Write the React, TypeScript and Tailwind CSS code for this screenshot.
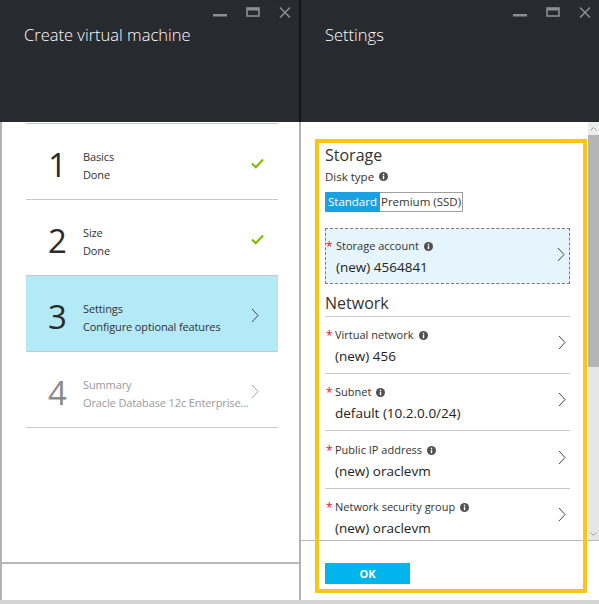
import type { ReactNode } from 'react';

const font = { fontFamily: '"Open Sans", "Noto Sans", "Liberation Sans", sans-serif' };

function WindowControls() {
  return (
    <div className="flex items-start gap-[19px] mt-[7px] mr-[8px]">
      <svg width="14" height="11" viewBox="0 0 14 11">
        <rect x="0" y="7" width="14" height="2.5" fill="#8b8e93" />
      </svg>
      <svg width="14" height="10" viewBox="0 0 14 10">
        <rect x="1" y="1" width="12" height="8" fill="none" stroke="#8b8e93" strokeWidth="1.6" />
        <rect x="1" y="1" width="12" height="2.5" fill="#8b8e93" />
      </svg>
      <svg width="12" height="11" viewBox="0 0 12 11">
        <path d="M1 0.5 L11 10.5 M11 0.5 L1 10.5" stroke="#8b8e93" strokeWidth="1.5" />
      </svg>
    </div>
  );
}

function BladeHeader({ title }: { title: string }) {
  return (
    <div className="h-[122px] bg-[#272a2f] flex items-start justify-between shrink-0">
      <div className="ml-[24px] mt-[23px] text-[16.5px] font-light text-white leading-[24px]">{title}</div>
      <WindowControls />
    </div>
  );
}

function Chevron({ color = '#444' }: { color?: string }) {
  return (
    <svg width="8" height="15" viewBox="0 0 8 15">
      <path d="M1 1 L7 7.5 L1 14" fill="none" stroke={color} strokeWidth="1" />
    </svg>
  );
}

function Check() {
  return (
    <svg width="13" height="11" viewBox="0 0 13 11">
      <path d="M1 5.5 L4.8 9.3 L12 1.5" fill="none" stroke="#7fba00" strokeWidth="2" />
    </svg>
  );
}

function Info() {
  return (
    <svg width="9" height="9" viewBox="0 0 9 9" className="inline-block ml-[5px] -mt-[2px] align-middle">
      <circle cx="4.5" cy="4.5" r="4.5" fill="#505050" />
      <rect x="3.8" y="3.6" width="1.4" height="3.6" fill="#fff" />
      <rect x="3.8" y="1.7" width="1.4" height="1.3" fill="#fff" />
    </svg>
  );
}

type Step = { n: string; title: string; sub: string; state: 'done' | 'active' | 'todo' };

const steps: Step[] = [
  { n: '1', title: 'Basics', sub: 'Done', state: 'done' },
  { n: '2', title: 'Size', sub: 'Done', state: 'done' },
  { n: '3', title: 'Settings', sub: 'Configure optional features', state: 'active' },
  { n: '4', title: 'Summary', sub: 'Oracle Database 12c Enterprise...', state: 'todo' },
];

function StepRow({ step }: { step: Step }) {
  const muted = step.state === 'todo';
  return (
    <div
      className={`h-[76px] flex items-center border-b border-[#c8c8c8] pt-[8px] ${
        step.state === 'active' ? 'bg-[#b4e9f8] border-[#b4e9f8]' : ''
      }`}
    >
      <div
        className={`w-[57px] shrink-0 pl-[22px] text-[33px] font-medium leading-none -mt-[2px] ${
          muted ? 'text-[#8a8a8a]' : 'text-[#2b2b2b]'
        }`}
      >
        {step.n}
      </div>
      <div
        className={`flex-1 min-w-0 whitespace-nowrap text-[11px] leading-[18px] tracking-[-0.12px] ${
          muted ? 'text-[#9a9a9a]' : 'text-[#333]'
        }`}
      >
        <div>{step.title}</div>
        <div>{step.sub}</div>
      </div>
      <div className="w-[28px] shrink-0 flex justify-start pl-[1px] -mt-[4px]">
        {step.state === 'done' ? <Check /> : <Chevron color={muted ? '#a0a0a0' : '#444'} />}
      </div>
    </div>
  );
}

function Field({ label, value, last }: { label: string; value: string; last?: boolean }) {
  return (
    <div className={`flex items-start pl-[10px] pr-[4px] ${last ? '' : 'border-b border-[#c8c8c8]'}`}>
      <div className="flex-1 pt-[10px] pb-[7px]">
        <div className="text-[11px] leading-[16px] text-[#333] relative">
          <span className="absolute -left-[9px] top-[1px] text-[#e81123] text-[12px]">*</span>
          {label}
          <Info />
        </div>
        <div className="mt-[3px] text-[13.5px] leading-[20px] text-[#222]">{value}</div>
      </div>
      <div className="pt-[18px]">
        <Chevron />
      </div>
    </div>
  );
}

function Section({ children }: { children: ReactNode }) {
  return <div className="text-[16px] leading-[22px] text-[#333]">{children}</div>;
}

export default function App() {
  return (
    <div className="relative w-[599px] h-[604px] flex bg-[#d4d4d4] overflow-hidden" style={font}>
      {/* create vm blade */}
      <div className="w-[299px] h-[600px] flex flex-col">
        <BladeHeader title="Create virtual machine" />
        <div className="flex-1 bg-white border-l-2 border-[#b3b3b3] flex flex-col">
          <div className="mt-[1px] pl-[24px] pr-[21px]">
            <div className="border-t border-[#c8c8c8]" />
            {steps.map((s) => (
              <StepRow key={s.n} step={s} />
            ))}
          </div>
          <div className="flex-1" />
          <div className="h-[38px] border-t-2 border-[#b8b8b8]" />
        </div>
      </div>

      <div className="w-[2px] h-[600px] flex flex-col">
        <div className="h-[122px] bg-[#111315]" />
        <div className="flex-1 bg-[#b3b3b3]" />
      </div>

      {/* settings blade */}
      <div className="flex-1 h-[600px] flex flex-col">
        <BladeHeader title="Settings" />
        <div className="flex-1 bg-white flex flex-col">
          <div className="h-[418px] flex">
            <div className="flex-1 pl-[24px] pr-[18px] pt-[22px] overflow-hidden">
              <Section>Storage</Section>
              <div className="mt-[3px] text-[11.5px] leading-[16px] text-[#333]">
                Disk type
                <Info />
              </div>
              <div className="mt-[7px] flex h-[20px] text-[11.5px] leading-[18px]">
                <div className="w-[55px] bg-[#1ba1e2] border border-[#1ba1e2] text-white text-center">Standard</div>
                <div className="w-[83px] border border-[#a0a0a0] border-l-0 text-[#333] text-center">Premium (SSD)</div>
              </div>
              <div className="mt-[16px] h-[56px] bg-[#e6f5fc] border border-dashed border-[#7a7a7a] flex items-start pl-[10px] pr-[4px]">
                <div className="flex-1 pt-[9px]">
                  <div className="text-[11px] leading-[16px] text-[#333] relative">
                    <span className="absolute -left-[10px] top-[1px] text-[#e81123] text-[12px]">*</span>
                    Storage account
                    <Info />
                  </div>
                  <div className="mt-[3px] text-[13.5px] leading-[20px] text-[#222]">(new) 4564841</div>
                </div>
                <div className="pt-[18px]">
                  <Chevron />
                </div>
              </div>
              <div className="mt-[8px] pb-[2px] border-b border-[#c8c8c8]">
                <Section>Network</Section>
              </div>
              <Field label="Virtual network" value="(new) 456" />
              <Field label="Subnet" value="default (10.2.0.0/24)" />
              <div className="h-[1px]" />
              <Field label="Public IP address" value="(new) oraclevm" />
              <Field label="Network security group" value="(new) oraclevm" last />
            </div>
            <div className="w-[11px] flex flex-col bg-[#e6e6e6]">
              <div className="h-[13px] bg-[#ececec] flex items-center justify-center">
                <svg width="7" height="4" viewBox="0 0 7 4">
                  <path d="M0.5 3.5 L3.5 0.5 L6.5 3.5" fill="none" stroke="#9a9a9a" strokeWidth="1" />
                </svg>
              </div>
              <div className="h-[232px] bg-[#b5b5b5]" />
              <div className="flex-1" />
              <div className="h-[13px] flex items-center justify-center">
                <svg width="7" height="4" viewBox="0 0 7 4">
                  <path d="M0.5 0.5 L3.5 3.5 L6.5 0.5" fill="none" stroke="#9a9a9a" strokeWidth="1" />
                </svg>
              </div>
            </div>
          </div>
          <div className="flex-1 border-t border-[#b8b8b8] pl-[24px] pt-[19px]">
            <button className="w-[85px] h-[21px] bg-[#00b4ec] text-white text-[11px] font-bold leading-[21px]">
              OK
            </button>
          </div>
        </div>
      </div>

      {/* highlight frame */}
      <div className="absolute left-[315px] top-[139px] w-[272px] h-[454px] border-4 border-[#fcc514] pointer-events-none" />
    </div>
  );
}
